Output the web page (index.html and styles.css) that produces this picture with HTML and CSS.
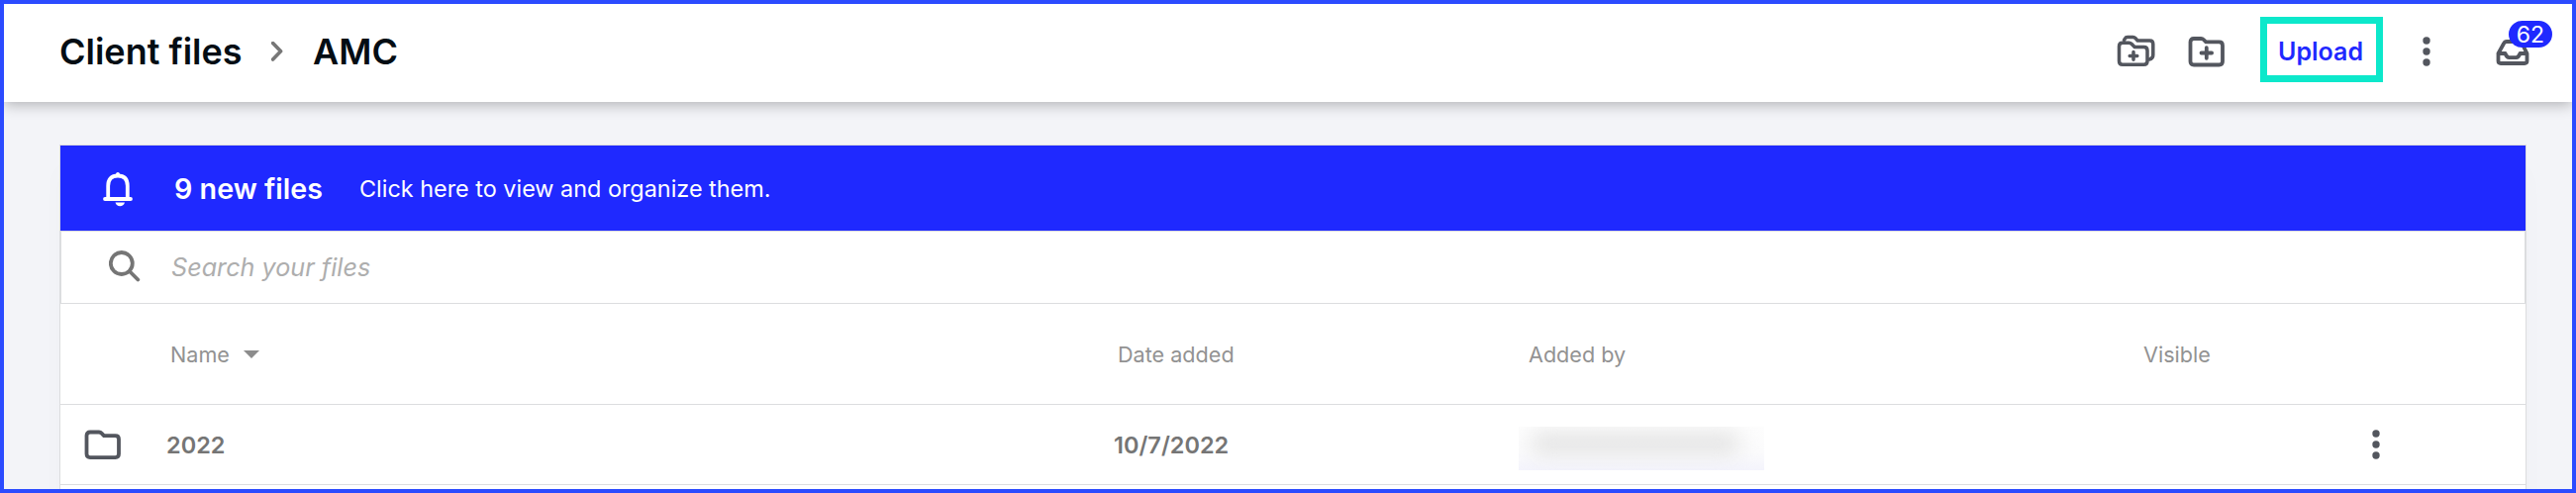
FILE: index.html
```html
<!DOCTYPE html>
<html lang="en">
<head>
    <meta charset="UTF-8">
    <meta name="viewport" content="width=device-width, initial-scale=1.0">
    <title>Client files</title>
    <link rel="stylesheet" href="styles.css">
</head>
<body>
    <div class="page">
        <header class="topbar">
            <nav class="breadcrumb">
                <span class="crumb crumb-root">Client files</span>
                <svg class="crumb-arrow" width="12" height="20" viewBox="0 0 12 20">
                    <path d="M1.6 1.6L9.6 9.8L1.6 18"/>
                </svg>
                <span class="crumb crumb-current">AMC</span>
            </nav>
            <div class="actions">
                <svg class="icon icon-folders" width="40" height="34" viewBox="0 0 40 34">
                    <path d="M7.5 5.6L8.4 4Q9.2 2.6 11 2.6H16.5Q18 2.6 19 3.6L21.2 6H33.4Q36.8 6 36.8 9.4V20.5Q36.8 24.2 33 25"/>
                    <path d="M6 8.2H12.5Q14 8.2 15 9.2L18.2 12.4H27.5Q31 12.4 31 15.9V26.7Q31 30.2 27.5 30.2H6Q2.5 30.2 2.5 26.7V11.7Q2.5 8.2 6 8.2Z"/>
                    <path d="M17 17.6V25.2M13.2 21.4H20.8"/>
                </svg>
                <svg class="icon icon-folder-plus" width="38" height="32" viewBox="0 0 38 32">
                    <path d="M6 3H13.2Q14.8 3 15.8 4L18.2 6.4H31.5Q35 6.4 35 9.9V26Q35 29.5 31.5 29.5H6Q2.5 29.5 2.5 26V6.5Q2.5 3 6 3Z"/>
                    <path d="M18.8 12.2V22.8M13.5 17.5H24.1"/>
                </svg>
                <button class="upload">Upload</button>
                <svg class="dots" width="8" height="30" viewBox="0 0 8 30">
                    <circle cx="4" cy="4" r="3.7"/>
                    <circle cx="4" cy="15" r="3.7"/>
                    <circle cx="4" cy="26" r="3.7"/>
                </svg>
                <div class="inbox">
                    <svg class="icon" width="34" height="28" viewBox="0 0 34 28">
                        <path d="M2.5 15V22.5Q2.5 25 5 25H29Q31.5 25 31.5 22.5V15L26.5 5Q25.5 3 23.5 3H11Q9 3 8 5L2.5 15H9.5Q11 19.2 13.5 19.2H20.5Q23 19.2 24.5 15H31.5"/>
                    </svg>
                    <span class="badge">62</span>
                </div>
            </div>
        </header>

        <main class="files">
            <div class="notice">
                <svg class="bell" width="30" height="36" viewBox="0 0 30 36">
                    <path class="bell-body" d="M5.2 28V14.8Q5.2 4.5 15 4.5Q24.8 4.5 24.8 14.8V28M2 28H28"/>
                    <path class="bell-fill" d="M12.8 4Q13 1 15 1Q17 1 17.2 4ZM12.5 31.5H22Q20.8 35.3 17.2 35.3Q13.7 35.3 12.5 31.5Z"/>
                </svg>
                <span class="notice-title">9 new files</span>
                <span class="notice-text">Click here to view and organize them.</span>
            </div>
            <div class="search">
                <svg class="search-icon" width="32" height="32" viewBox="0 0 32 32">
                    <circle cx="12.8" cy="13" r="11"/>
                    <path d="M20.8 21L29.3 29.5"/>
                </svg>
                <span class="placeholder">Search your files</span>
            </div>
            <div class="row row-head">
                <span></span>
                <span class="name-head">Name <i class="caret"></i></span>
                <span class="date-head">Date added</span>
                <span>Added by</span>
                <span>Visible</span>
            </div>
            <div class="row row-file">
                <svg class="icon icon-folder" width="38" height="32" viewBox="0 0 38 32">
                    <path d="M6 3.5H15Q16.6 3.5 17.6 4.6L20 7.1H31.5Q35 7.1 35 10.6V25.6Q35 29.1 31.5 29.1H6Q2.5 29.1 2.5 25.6V7Q2.5 3.5 6 3.5Z"/>
                </svg>
                <span class="file-name">2022</span>
                <span class="file-date">10/7/2022</span>
                <div class="redacted"><div class="smudge"></div></div>
                <span></span>
                <svg class="dots" width="8" height="30" viewBox="0 0 8 30">
                    <circle cx="4" cy="4" r="3.7"/>
                    <circle cx="4" cy="15" r="3.7"/>
                    <circle cx="4" cy="26" r="3.7"/>
                </svg>
            </div>
        </main>
    </div>
</body>
</html>
```

FILE: styles.css
```css
* {
    box-sizing: border-box;
}
body {
    margin: 0;
    font-family: Inter, "Liberation Sans", sans-serif;
    color: #040d14;
}
.page {
    height: 498px;
    border: 4px solid #2b4bff;
    background-color: #f3f4f8;
    overflow: hidden;
}
.topbar {
    display: flex;
    justify-content: space-between;
    height: 99px;
    padding: 0 20px 3px 56px;
    background-color: #fff;
    box-shadow: 0 2px 14px rgba(0,0,0,0.3);
}
.breadcrumb {
    display: flex;
    align-items: center;
}
.crumb {
    font-size: 36px;
    font-weight: 600;
    white-space: nowrap;
}
.crumb-root {
    width: 214px;
}
.crumb-arrow {
    width: 12px;
    margin-right: 30px;
    fill: none;
    stroke: #777;
    stroke-width: 3.6;
    stroke-linecap: round;
    stroke-linejoin: round;
}
.actions {
    display: flex;
    align-items: center;
}
.icon {
    fill: none;
    stroke: #53565e;
    stroke-width: 3.8;
    stroke-linecap: round;
    stroke-linejoin: round;
}
.icon-folders {
    margin-right: 32px;
    stroke-width: 3.5;
}
.icon-folder-plus {
    margin-right: 35px;
}
.upload {
    width: 124px;
    height: 66px;
    margin: 0 40px 4px 0;
    padding: 3px 2px 0 0;
    border: 7px solid #0ce8cb;
    background: none;
    color: #1f29ff;
    font: 600 25px Inter, "Liberation Sans", sans-serif;
}
.dots {
    fill: #53565e;
}
.inbox {
    position: relative;
    display: flex;
    margin: 2px 0 0 66px;
    padding-right: 23px;
}
.badge {
    position: absolute;
    top: -18px;
    left: 13px;
    width: 44px;
    height: 27px;
    border-radius: 14px;
    background-color: #1f29ff;
    color: #fff;
    font-size: 23px;
    line-height: 28px;
    text-align: center;
}
.files {
    width: 2492px;
    height: 360px;
    margin: 43px 0 0 56px;
    border: 1px solid #dcdddf;
    background-color: #fff;
    box-shadow: 0 24px 24px rgba(0,0,0,0.02);
}
.notice {
    display: flex;
    align-items: center;
    height: 86px;
    padding-left: 43px;
    background-color: #1f29ff;
    color: #fff;
    white-space: nowrap;
}
.bell {
    margin: 2px 42px 0 0;
}
.bell-body {
    fill: none;
    stroke: #fff;
    stroke-width: 3.8;
    stroke-linecap: round;
}
.bell-fill {
    fill: #fff;
}
.notice-title {
    width: 187px;
    font-size: 28.7px;
    font-weight: 600;
}
.notice-text {
    font-size: 23.4px;
}
.search {
    display: flex;
    align-items: center;
    height: 74px;
    padding-left: 48px;
    border: 1px solid #dcdddf;
}
.search-icon {
    margin: 0 31px 3px 0;
    fill: none;
    stroke: #757575;
    stroke-width: 3.8;
    stroke-linecap: round;
}
.placeholder {
    color: #aeaeae;
    font-size: 25.2px;
    font-style: italic;
}
.row {
    display: grid;
    grid-template-columns: 109px 957px 415px 621px 230px auto;
    align-items: center;
    border-bottom: 1px solid #dcdddf;
}
.row-head {
    height: 102px;
    padding-left: 2px;
    color: #929292;
    font-size: 21.6px;
}
.name-head {
    display: flex;
    align-items: center;
}
.caret {
    margin-left: 14px;
    border-top: 8px solid #8c8c8c;
    border-left: 8px solid transparent;
    border-right: 8px solid transparent;
}
.row-file {
    grid-template-columns: 107px 957px 418px 620px 233px auto;
    height: 81px;
    color: #757575;
    font-size: 23.5px;
    font-weight: 600;
}
.icon-folder {
    margin-left: 24px;
}
.redacted {
    width: 248px;
    height: 44px;
    margin: 8px 0 0 -9px;
    padding: 5px 24px 0 12px;
    background: linear-gradient(#fdfdfd, #fbfbfc 60%, #f4f4fc);
    overflow: hidden;
}
.smudge {
    height: 24px;
    border-radius: 12px;
    background-color: #e5e5e5;
    filter: blur(10px);
}
```
